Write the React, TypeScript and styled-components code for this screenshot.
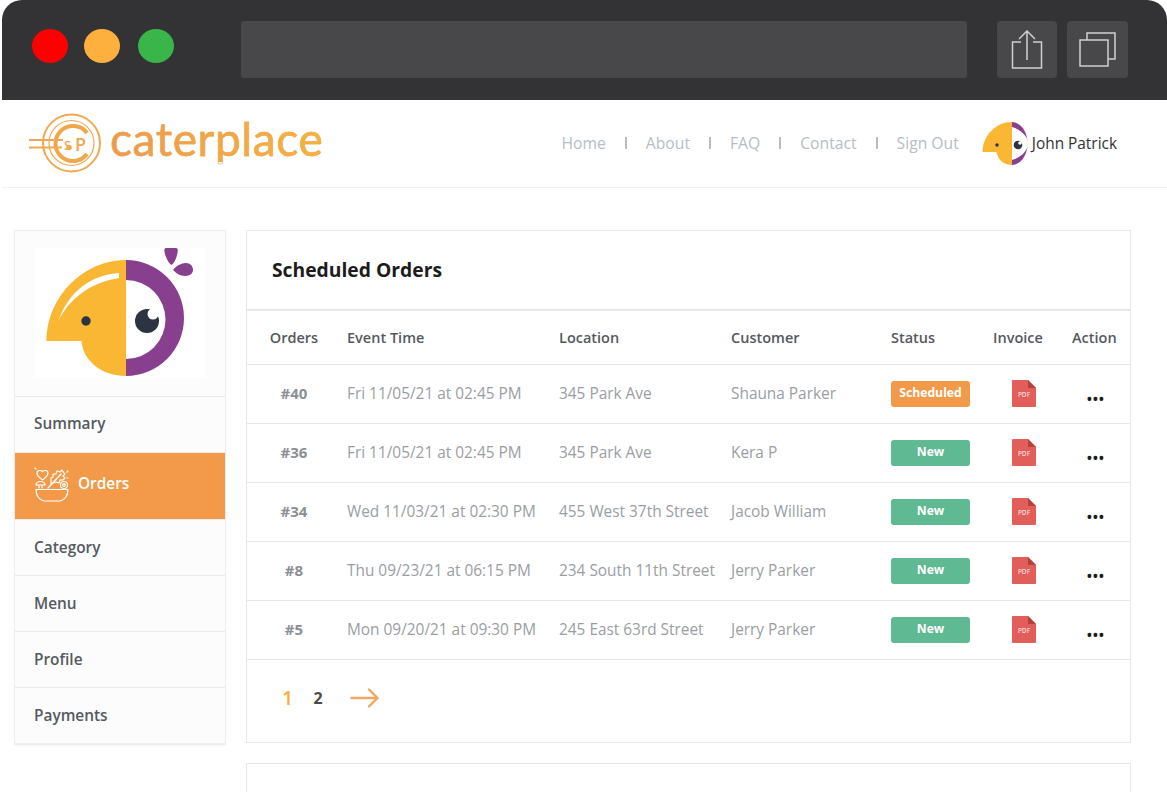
import React from 'react';
import styled, { createGlobalStyle } from 'styled-components';

const orange = '#f29a4a';
const green = '#5fb993';

const orders = [
  { id: '#40', time: 'Fri 11/05/21 at 02:45 PM', location: '345 Park Ave', customer: 'Shauna Parker', status: 'Scheduled' },
  { id: '#36', time: 'Fri 11/05/21 at 02:45 PM', location: '345 Park Ave', customer: 'Kera P', status: 'New' },
  { id: '#34', time: 'Wed 11/03/21 at 02:30 PM', location: '455 West 37th Street', customer: 'Jacob William', status: 'New' },
  { id: '#8', time: 'Thu 09/23/21 at 06:15 PM', location: '234 South 11th Street', customer: 'Jerry Parker', status: 'New' },
  { id: '#5', time: 'Mon 09/20/21 at 09:30 PM', location: '245 East 63rd Street', customer: 'Jerry Parker', status: 'New' },
];

const menuItems = [
  { label: 'Summary' },
  { label: 'Orders', active: true },
  { label: 'Category' },
  { label: 'Menu' },
  { label: 'Profile' },
  { label: 'Payments' },
];

const navLinks = ['Home', 'About', 'FAQ', 'Contact', 'Sign Out'];

const BrandMark = () => (
  <svg width="74" height="62" viewBox="0 0 74 62" fill="none">
    <g stroke="#efa951">
      <circle cx="43.500" cy="31" r="28.500" strokeWidth="2" />
      <circle cx="43.500" cy="31" r="22.500" strokeWidth="1.200" />
      <path d="M59 21a17.500 17.500 0 1 0 0 21" strokeWidth="4" stroke="#f0a64c" />
      <path d="M1 28h34M1 35.500h33" strokeWidth="2" />
    </g>
    <MarkLetter x="36" y="38" $size={13}>S</MarkLetter>
    <circle cx="41" cy="35.500" r="2.800" fill="#efa951" />
    <MarkLetter x="47" y="39" $size={18}>P</MarkLetter>
  </svg>
);

const MarkLetter = styled.text<{ $size: number }>`
  font-family: 'Open Sans', sans-serif;
  font-size: ${(p) => p.$size}px;
  font-weight: 600;
  fill: #efa951;
`;

const Parrot = () => (
  <svg width="172" height="130" viewBox="0 0 172 130">
    <path d="M92 12C50 12 13 48 12.500 93H47.500C49 113 68 128 92 128Z" fill="#fab733" />
    <path d="M92 12a58 58 0 0 1 0 116V111a39.500 39.500 0 0 0 0-79Z" fill="#883f8e" />
    <path d="M85 25C58 27 35 42 24 74 35 50 58 34 85 30Z" fill="#fff" />
    <circle cx="52" cy="73" r="4.700" fill="#2b3440" />
    <circle cx="113" cy="73" r="12" fill="#2b3440" />
    <circle cx="119" cy="66" r="5.500" fill="#fff" />
    <path d="M132 0h10c2 0 2 2 1.500 5-1 5-3 10-6 12-3-2-6-8-7-13-.5-2 0-4 1.500-4Z" fill="#883f8e" />
    <path d="M139 22c3-4 8-7 13-7 4 0 7 3 7 7 0 3-3 6-8 6-5 0-9-3-12-6Z" fill="#883f8e" />
  </svg>
);

const AvatarMark = () => (
  <svg width="46" height="44" viewBox="0 0 46 44">
    <path d="M30 1A15.500 21.500 0 0 1 30 44Z" fill="#883f8e" />
    <path d="M30 6C38 8 46 15 46 22.500 46 30 38 37 30 39Z" fill="#fff" />
    <path d="M30 1C14 1 1 14 .5 31H14.500C16 39 22 44 30 44Z" fill="#fab733" />
    <circle cx="15" cy="24" r="1.700" fill="#2b3440" />
    <circle cx="36" cy="24" r="4.300" fill="#2b3440" />
    <circle cx="38" cy="22" r="1.800" fill="#fff" />
  </svg>
);

const BowlIcon = () => (
  <svg width="36" height="36" viewBox="0 0 36 36" fill="none" stroke="#fff" strokeWidth="1.200" strokeLinecap="round" strokeLinejoin="round">
    <path d="M2 22.500h32c0 6-3 10-8 11.500H10c-5-1.500-8-5.500-8-11.500Z" />
    <path d="M3 6c0-3 4-3 5.500-1.500C10 3 14 3 14 6c0 3-3 5-5.500 7C6 11 3 9 3 6Z" />
    <path d="M2 18a4.500 3.500 0 0 1 9 0ZM5 18v3M8 18v3" />
    <path d="M14 21 27 7" />
    <path d="M17 17V11l2-1V7h3l1-3 3 1 2-2 2 3 1 1-2 2 2 2-2 2h-3l-1 3-3-1-3 1Z" />
    <circle cx="30" cy="18" r="3.500" />
    <circle cx="30" cy="18" r="1.300" />
    <path d="M33 5l1-1M33 11h1M1 1l1 1" />
  </svg>
);

const ShareIcon = () => (
  <svg width="32" height="40" viewBox="0 0 32 40" fill="none" stroke="#cfcfcf" strokeWidth="1.500">
    <path d="M10 12H1.500v26h29V12H22" />
    <path d="M16 30V1M8 9l8-8 8 8" />
  </svg>
);

const WindowsIcon = () => (
  <svg width="38" height="36" viewBox="0 0 38 36" fill="none" stroke="#cfcfcf" strokeWidth="1.500">
    <rect x="1" y="8" width="28" height="26" />
    <path d="M8 8V1h28v26h-7" />
  </svg>
);

const PdfIcon = () => (
  <svg width="24" height="27" viewBox="0 0 24 27">
    <path d="M1 0h15l8 8v18a1 1 0 0 1-1 1H1a1 1 0 0 1-1-1V1a1 1 0 0 1 1-1Z" fill="#e35e5a" />
    <path d="M16 0l8 8h-8Z" fill="#b2423e" />
    <PdfLabel x="12" y="17" textAnchor="middle">PDF</PdfLabel>
  </svg>
);

const PdfLabel = styled.text`
  font-family: 'Open Sans', sans-serif;
  font-size: 6.500px;
  font-weight: 600;
  fill: #fbdcda;
`;

const ArrowIcon = () => (
  <svg width="30" height="20" viewBox="0 0 30 20" fill="none" stroke="#f2a75f" strokeWidth="2.400" strokeLinecap="round" strokeLinejoin="round">
    <path d="M1.500 10h26M19 1.500 27.500 10 19 18.500" />
  </svg>
);

const App = () => {
  return (
    <Page>
      <GlobalStyle />
      <TitleBar>
        <Dots>
          <Dot $color="#fe0000" />
          <Dot $color="#fdb03d" />
          <Dot $color="#3ab54a" />
        </Dots>
        <AddressBar />
        <ToolButton><ShareIcon /></ToolButton>
        <ToolButton><WindowsIcon /></ToolButton>
      </TitleBar>

      <Header>
        <Brand>
          <BrandMark />
          <BrandName>caterplace</BrandName>
        </Brand>
        <Nav>
          {navLinks.map((link, i) => (
            <React.Fragment key={link}>
              {i > 0 && <NavSep />}
              <NavLink>{link}</NavLink>
            </React.Fragment>
          ))}
        </Nav>
        <User>
          <AvatarMark />
          <UserName>John Patrick</UserName>
        </User>
      </Header>

      <Main>
        <Sidebar>
          <LogoBox>
            <Parrot />
          </LogoBox>
          {menuItems.map((item) => (
            <MenuItem key={item.label} $active={item.active}>
              {item.active && <BowlIcon />}
              {item.label}
            </MenuItem>
          ))}
        </Sidebar>

        <Content>
          <Card>
            <CardTitle>Scheduled Orders</CardTitle>
            <HeadRow>
              <OrderCell>Orders</OrderCell>
              <span>Event Time</span>
              <span>Location</span>
              <span>Customer</span>
              <span>Status</span>
              <span>Invoice</span>
              <span>Action</span>
            </HeadRow>
            {orders.map((order) => (
              <Row key={order.id}>
                <OrderId>{order.id}</OrderId>
                <span>{order.time}</span>
                <span>{order.location}</span>
                <span>{order.customer}</span>
                <Badge $scheduled={order.status === 'Scheduled'}>{order.status}</Badge>
                <PdfCell><PdfIcon /></PdfCell>
                <More>•••</More>
              </Row>
            ))}
            <Pagination>
              <PageNum $current>1</PageNum>
              <PageNum>2</PageNum>
              <ArrowIcon />
            </Pagination>
          </Card>
          <NextCard />
        </Content>
      </Main>
    </Page>
  );
};

export default App;

const GlobalStyle = createGlobalStyle`
  html, body {
    margin: 0;
    background: #fff;
  }
  * {
    box-sizing: border-box;
  }
`;

const Page = styled.div`
  width: 1167px;
  height: 792px;
  overflow: hidden;
  background: #fff;
  font-family: 'Open Sans', sans-serif;
`;

const TitleBar = styled.div`
  display: flex;
  align-items: center;
  height: 100px;
  margin-left: 2px;
  padding: 0 39px 1px 30px;
  background: #333335;
  border-radius: 20px 20px 0 0;
`;

const Dots = styled.div`
  display: flex;
  gap: 16px;
  width: 142px;
  margin: 0 67px 7px 0;
`;

const Dot = styled.span<{ $color: string }>`
  flex: none;
  width: 36px;
  height: 34px;
  border-radius: 50%;
  background: ${(p) => p.$color};
  &:last-child {
    margin-left: 2px;
  }
`;

const AddressBar = styled.div`
  width: 726px;
  height: 57px;
  margin-right: 30px;
  background: #48484a;
  border-radius: 3px;
`;

const ToolButton = styled.div`
  display: flex;
  align-items: center;
  justify-content: center;
  width: 60px;
  height: 57px;
  margin-right: 10px;
  background: #48484a;
  border-radius: 4px;
  &:last-child {
    width: 61px;
    margin-right: 0;
  }
`;

const Header = styled.header`
  display: flex;
  align-items: center;
  height: 88px;
  margin-left: 2px;
  padding: 0 50px 2px 26px;
  border-bottom: 1px solid #f1f1f3;
`;

const Brand = styled.div`
  display: flex;
  align-items: center;
  gap: 8px;
`;

const BrandName = styled.span`
  margin-top: -7px;
  font-family: 'Lato', sans-serif;
  font-size: 46px;
  font-weight: 400;
  line-height: 1;
  letter-spacing: 0.600px;
  color: transparent;
  background: linear-gradient(90deg, #ec9a52, #f6b33c);
  -webkit-background-clip: text;
  background-clip: text;
  -webkit-text-stroke: 0.500px #f0a54a;
`;

const Nav = styled.nav`
  display: flex;
  align-items: center;
  margin-left: auto;
`;

const NavLink = styled.span`
  font-size: 15.700px;
  color: #b7bdc2;
`;

const NavSep = styled.span`
  width: 2px;
  height: 12px;
  margin: 0 19px;
  background: #b7bdc2;
`;

const User = styled.div`
  display: flex;
  align-items: center;
  margin-left: 23px;
`;

const UserName = styled.span`
  margin: 1px 0 0 4px;
  font-size: 15.400px;
  color: #333;
`;

const Main = styled.main`
  display: flex;
  align-items: flex-start;
  gap: 20px;
  padding: 42px 36px 0 14px;
`;

const Sidebar = styled.aside`
  flex: none;
  width: 212px;
  background: #fcfcfc;
  border: 1px solid #eeeef0;
  border-bottom-width: 2px;
  box-shadow: 0 1px 2px rgba(0, 0, 0, 0.04);
`;

const LogoBox = styled.div`
  display: flex;
  justify-content: center;
  height: 165px;
  padding-top: 17px;
  & > svg {
    background: #fff;
  }
`;

const MenuItem = styled.div<{ $active?: boolean }>`
  display: flex;
  align-items: center;
  gap: 8px;
  height: ${(p) => (p.$active ? '67px' : '56px')};
  padding: ${(p) => (p.$active ? '0 0 6px 19px' : '0 0 1px 19px')};
  font-size: 15.400px;
  font-weight: 600;
  color: ${(p) => (p.$active ? '#fff' : '#555a60')};
  background: ${(p) => (p.$active ? orange : 'transparent')};
  border-top: 1px solid #ebebed;
  ${LogoBox} + & {
    padding-bottom: 3px;
  }
  & > svg {
    margin-top: 4px;
  }
`;

const Content = styled.div`
  display: flex;
  flex-direction: column;
  gap: 20px;
  width: 885px;
`;

const Card = styled.section`
  background: #fff;
  border: 1px solid #e7e7ea;
`;

const NextCard = styled(Card)`
  height: 60px;
`;

const CardTitle = styled.h2`
  display: flex;
  align-items: center;
  height: 80px;
  margin: 0;
  padding: 0 0 2px 25px;
  font-size: 19.300px;
  font-weight: 700;
  color: #1c1c1c;
  border-bottom: 2px solid #e7e7ea;
`;

const tableColumns = '100px 212px 172px 160px 102px 79px 58px';

const HeadRow = styled.div`
  display: grid;
  grid-template-columns: ${tableColumns};
  align-items: center;
  height: 53px;
  font-size: 14.500px;
  font-weight: 600;
  color: #55595e;
`;

const OrderCell = styled.span`
  width: 94px;
  text-align: center;
`;

const Row = styled.div`
  display: grid;
  grid-template-columns: ${tableColumns};
  align-items: center;
  height: 59px;
  padding-bottom: 2px;
  font-size: 15.400px;
  color: #9a9ea3;
  border-top: 1px solid #e7e7ea;
`;

const OrderId = styled(OrderCell)`
  font-weight: 700;
  font-size: 15px;
  color: #8c8f93;
`;

const Badge = styled.span<{ $scheduled?: boolean }>`
  width: 79px;
  height: 26px;
  margin-top: 2px;
  font-size: 12.200px;
  font-weight: 700;
  line-height: 24px;
  text-align: center;
  color: #fff;
  background: ${(p) => (p.$scheduled ? orange : green)};
  border-radius: 3px;
`;

const PdfCell = styled.span`
  display: flex;
  padding-left: 19px;
`;

const More = styled.span`
  width: 46px;
  padding-top: 11px;
  font-size: 18px;
  line-height: 1;
  letter-spacing: -0.800px;
  text-align: center;
  color: #1d1d1d;
`;

const Pagination = styled.div`
  display: flex;
  align-items: center;
  height: 83px;
  padding: 0 0 7px 35px;
  border-top: 1px solid #e7e7ea;
`;

const PageNum = styled.span<{ $current?: boolean }>`
  margin-right: ${(p) => (p.$current ? '20px' : '27px')};
  font-size: ${(p) => (p.$current ? '20px' : '16px')};
  font-weight: ${(p) => (p.$current ? 600 : 700)};
  color: ${(p) => (p.$current ? '#fbb03b' : '#4a4a4a')};
`;
